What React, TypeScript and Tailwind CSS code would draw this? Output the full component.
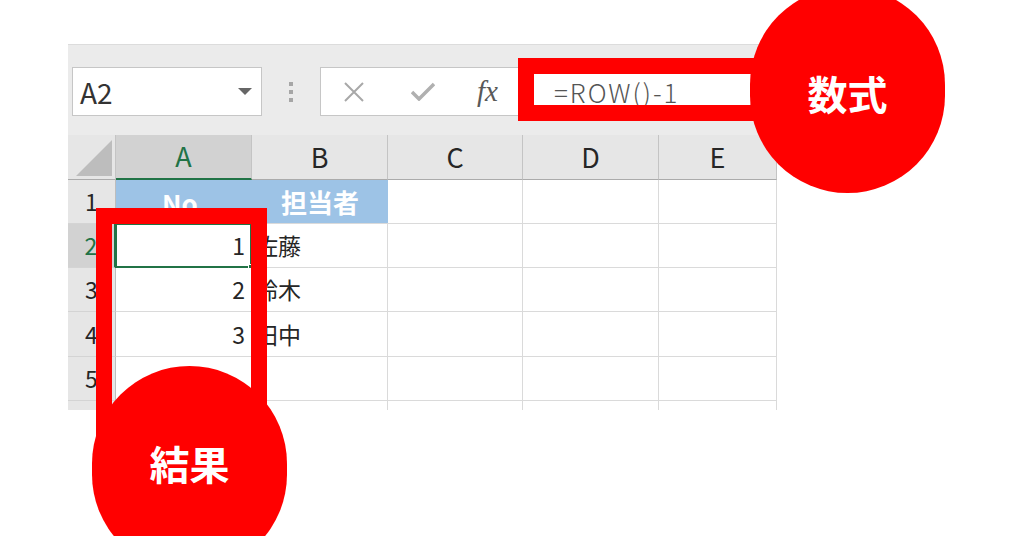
import React from "react";

const rows = [
  { n: "1", a: "No.", b: "担当者", head: true },
  { n: "2", a: "1", b: "佐藤", active: true },
  { n: "3", a: "2", b: "鈴木" },
  { n: "4", a: "3", b: "田中" },
  { n: "5", a: "", b: "" },
];

const ColHeader: React.FC<{ label: string; active?: boolean }> = ({ label, active }) => (
  <div
    className={`flex items-center justify-center text-[27px] border-r border-r-[#c4c4c4] ${
      active
        ? "bg-[#d2d2d2] text-[#217346] border-b-2 border-b-[#217346]"
        : "bg-[#e6e6e6] text-[#262626] border-b border-b-[#ababab]"
    }`}
  >
    {label}
  </div>
);

const EmptyCell: React.FC<{ last?: boolean }> = ({ last }) => (
  <div className={`bg-white border-r border-[#dadada] ${last ? "" : "border-b"}`} />
);

export default function App() {
  return (
    <div className="relative w-[1024px] h-[536px] overflow-hidden bg-white pt-[44px] pl-[68px] font-['Noto_Sans_CJK_JP','Noto_Sans',sans-serif]">
      <div className="w-[709px]">
        {/* formula bar */}
        <div className="h-[91px] bg-[#ebebeb] border-t border-[#dcdcdc] flex items-start pt-[22px] pl-[4px] pr-[4px]">
          <div className="w-[190px] h-[49px] bg-white border border-[#c6c6c6] flex items-center justify-between pl-[7px] pr-[9px]">
            <span className="text-[28px] text-[#333]">A2</span>
            <svg width="14" height="7" viewBox="0 0 14 7">
              <polygon points="0,0 14,0 7,7" fill="#666" />
            </svg>
          </div>
          <div className="w-[58px] h-[49px] flex flex-col items-center justify-center gap-[4px]">
            <div className="w-[4px] h-[4px] bg-[#a6a6a6]" />
            <div className="w-[4px] h-[4px] bg-[#a6a6a6]" />
            <div className="w-[4px] h-[4px] bg-[#a6a6a6]" />
          </div>
          <div className="flex-1 h-[49px] bg-white border border-[#c6c6c6] flex items-center pl-[22px]">
            <svg width="22" height="20" viewBox="0 0 22 20">
              <path d="M2 1 L20 19 M20 1 L2 19" stroke="#a8a8a8" strokeWidth="2" />
            </svg>
            <svg width="24" height="19" viewBox="0 0 24 19" className="ml-[46px]">
              <polyline points="1,10 8,17 23,2" fill="none" stroke="#b0b0b0" strokeWidth="3.5" />
            </svg>
            <span className="ml-[42px] text-[29px] italic text-[#595959] font-['Liberation_Serif',serif] leading-none">
              fx
            </span>
            <span className="ml-[56px] text-[26px] font-light text-[#555] tracking-[2px]">=ROW()-1</span>
          </div>
        </div>

        {/* grid */}
        <div className="grid grid-cols-[48px_136px_136px_135px_136px_118px] grid-rows-[45px_44px_44px_44px_45px_44px_9px]">
          <div className="bg-[#e6e6e6] border-r border-r-[#c4c4c4] border-b border-b-[#ababab] flex items-end justify-end pr-[3px] pb-[3px]">
            <svg width="36" height="36" viewBox="0 0 36 36">
              <polygon points="36,0 36,36 0,36" fill="#bdbdbd" />
            </svg>
          </div>
          <ColHeader label="A" active />
          <ColHeader label="B" />
          <ColHeader label="C" />
          <ColHeader label="D" />
          <ColHeader label="E" />

          {rows.map((r) => (
            <React.Fragment key={r.n}>
              <div
                className={`flex items-center justify-center text-[23px] border-b border-b-[#d4d4d4] ${
                  r.active
                    ? "bg-[#d2d2d2] text-[#217346] border-r-2 border-r-[#217346]"
                    : "bg-[#e6e6e6] text-[#262626] border-r border-r-[#bdbdbd]"
                }`}
              >
                {r.n}
              </div>
              {r.head ? (
                <>
                  <div className="bg-[#9dc3e6] flex items-center justify-center text-white font-bold text-[26px]">
                    {r.a}
                  </div>
                  <div className="bg-[#9dc3e6] border-b border-[#dadada] flex items-center justify-center text-white font-bold text-[26px]">
                    {r.b}
                  </div>
                </>
              ) : (
                <>
                  <div className="relative bg-white border-r border-b border-[#dadada] flex items-center justify-end pr-[6px] text-[23px] text-[#262626]">
                    {r.a}
                    {r.active && (
                      <>
                        <div className="absolute -left-px -top-px -right-px -bottom-px border-2 border-[#217346]" />
                        <div className="absolute -right-[4px] -bottom-[4px] w-[7px] h-[7px] bg-[#217346] border border-white" />
                      </>
                    )}
                  </div>
                  <div className="bg-white border-r border-b border-[#dadada] flex items-center pl-[3px] text-[23px] text-[#262626]">
                    {r.b}
                  </div>
                </>
              )}
              <EmptyCell />
              <EmptyCell />
              <EmptyCell />
            </React.Fragment>
          ))}

          <div className="bg-[#e6e6e6] border-r border-[#bdbdbd]" />
          <EmptyCell last />
          <EmptyCell last />
          <EmptyCell last />
          <EmptyCell last />
          <EmptyCell last />
        </div>
      </div>

      {/* annotations */}
      <div className="absolute left-[518px] top-[58px] w-[262px] h-[63px] border-[16px] border-r-0 border-[#ff0000]" />
      <div className="absolute left-[96px] top-[208px] w-[171px] h-[260px] border-[16px] border-b-0 border-[#ff0000]" />
      <div className="absolute left-[750px] top-[-13px] w-[195px] h-[206px] rounded-full bg-[#ff0000] flex items-center justify-center pt-[6px]">
        <span className="text-white font-bold text-[40px] leading-none">数式</span>
      </div>
      <div className="absolute left-[92px] top-[366px] w-[195px] h-[206px] rounded-full bg-[#ff0000] flex items-center justify-center pb-[12px]">
        <span className="text-white font-bold text-[40px] leading-none">結果</span>
      </div>
    </div>
  );
}
